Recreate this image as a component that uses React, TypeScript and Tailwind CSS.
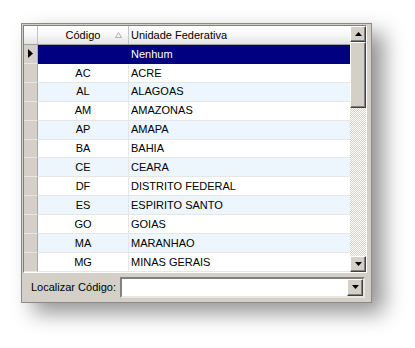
const ROWS: [string, string][] = [
  ["", "Nenhum"],
  ["AC", "ACRE"],
  ["AL", "ALAGOAS"],
  ["AM", "AMAZONAS"],
  ["AP", "AMAPA"],
  ["BA", "BAHIA"],
  ["CE", "CEARA"],
  ["DF", "DISTRITO FEDERAL"],
  ["ES", "ESPIRITO SANTO"],
  ["GO", "GOIAS"],
  ["MA", "MARANHAO"],
  ["MG", "MINAS GERAIS"],
];

// Classic raised 3D button face
function Btn({ dir, className }: { dir: "up" | "down"; className: string }) {
  return (
    <div
      className={`flex items-center justify-center bg-[#d4d0c8] border border-t-white border-l-white border-r-[#404040] border-b-[#404040] shadow-[inset_-1px_-1px_0_#808080] ${className}`}
    >
      <svg width="7" height="4" viewBox="0 0 7 4">
        {dir === "up" ? <path d="M3.5 0 L7 4 L0 4 Z" fill="#000" /> : <path d="M0 0 L7 0 L3.5 4 Z" fill="#000" />}
      </svg>
    </div>
  );
}

export default function App() {
  return (
    <div className="w-[415px] h-[348px] bg-white pt-[23px] pl-[21px] font-['Liberation_Sans',Arial,sans-serif] text-[11px] text-black">
      <div className="w-[351px] h-[280px] border border-[#8a8a8a] bg-[#d4d0c8] p-px flex flex-col shadow-[12px_10px_20px_rgba(0,0,0,0.42)]">
        {/* Grid */}
        <div className="flex h-[248px] mr-[3px] border border-t-[#808080] border-l-[#808080] border-r-white border-b-white">
          <div className="flex-1 flex flex-col bg-white">
            {/* Header */}
            <div className="flex h-[19px] bg-gradient-to-b from-white via-[#f7f7f7] to-[#e3e3e3] border-b border-[#a0a0a0]">
              <div className="w-[14px] border-r border-[#c4c4c4]" />
              <div className="w-[91px] relative flex items-center justify-center border-r border-[#c4c4c4]">
                <span>Código</span>
                <svg className="absolute right-[6px] top-[6px]" width="7" height="6" viewBox="0 0 7 6">
                  <path d="M3.5 0.5 L6.5 5.5 L0.5 5.5 Z" fill="none" stroke="#b0b0b0" strokeWidth="1" />
                </svg>
              </div>
              <div className="flex-1 flex items-center pl-[2px]">Unidade Federativa</div>
            </div>
            {/* Rows */}
            {ROWS.map(([code, name], i) => {
              const sel = i === 0;
              const alt = i % 2 === 0 ? "bg-[#eef6fd]" : "bg-white";
              return (
                <div key={i} className="flex h-[19px]">
                  <div className="w-[14px] flex items-center justify-center bg-[#d4d0c8] border-b border-[#e8e6e0] border-r border-r-[#a8a8a8]">
                    {sel && (
                      <svg width="5" height="9" viewBox="0 0 5 9">
                        <path d="M0 0 L5 4.5 L0 9 Z" fill="#000" />
                      </svg>
                    )}
                  </div>
                  <div
                    className={`w-[91px] flex items-center justify-center border-r border-b ${
                      sel ? "bg-[#000080] text-white border-[#000080]" : `${alt} border-[#e6e6e6]`
                    }`}
                  >
                    {code}
                  </div>
                  <div
                    className={`flex-1 flex items-center pl-[2px] border-b ${
                      sel ? "bg-[#000080] text-white border-[#000080]" : `${alt} border-[#e6e6e6]`
                    }`}
                  >
                    {name}
                  </div>
                </div>
              );
            })}
          </div>
          {/* Scrollbar */}
          <div className="w-[16px] flex flex-col bg-[conic-gradient(#d4d0c8_25%,#ffffff_0_50%,#d4d0c8_0_75%,#ffffff_0)] bg-[length:2px_2px]">
            <Btn dir="up" className="h-[16px]" />
            <div className="h-[66px] bg-[#d4d0c8] border border-t-white border-l-white border-r-[#404040] border-b-[#404040] shadow-[inset_-1px_-1px_0_#808080]" />
            <div className="flex-1" />
            <Btn dir="down" className="h-[16px]" />
          </div>
        </div>
        {/* Bottom panel */}
        <div className="flex-1 flex items-center pl-[8px] pr-[5px] gap-[4px]">
          <span>Localizar Código:</span>
          <div className="flex-1 h-[21px] flex bg-white border-2 border-t-[#808080] border-l-[#808080] border-r-[#e8e6e0] border-b-[#e8e6e0]">
            <div className="flex-1" />
            <Btn dir="down" className="w-[16px] h-[17px]" />
          </div>
        </div>
      </div>
    </div>
  );
}
